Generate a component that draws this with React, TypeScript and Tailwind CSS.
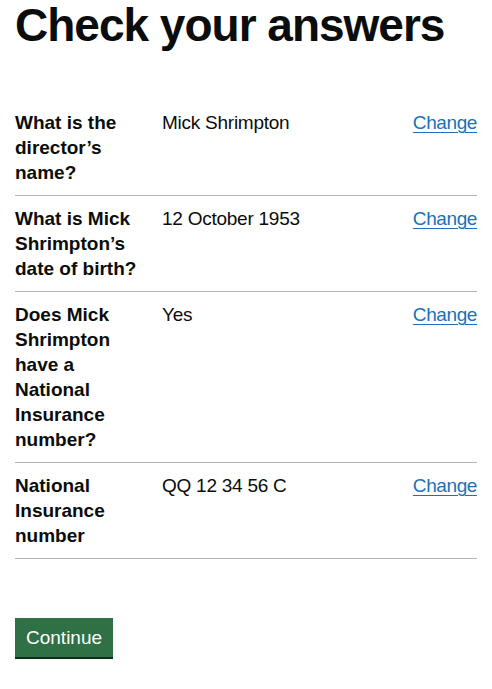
import React from "react";

const rows: { key: string; value: string }[] = [
  { key: "What is the director\u2019s name?", value: "Mick Shrimpton" },
  { key: "What is Mick Shrimpton\u2019s date of birth?", value: "12 October 1953" },
  { key: "Does Mick Shrimpton have a National Insurance number?", value: "Yes" },
  { key: "National Insurance number", value: "QQ 12 34 56 C" },
];

export default function App() {
  return (
    <div
      className="min-h-[689px] bg-white px-[15px] text-[#0b0c0c]"
      style={{ fontFamily: '"Liberation Sans", Arial, sans-serif' }}
    >
      <h1 className="m-0 mb-[50px] text-[46px] font-bold leading-[50px] tracking-[-1px]">
        Check your answers
      </h1>
      <dl className="m-0">
        {rows.map((r) => (
          <div
            key={r.key}
            className="flex border-b border-[#b1b4b6] py-[10px] text-[19px] leading-[25px]"
          >
            <dt className="w-[147px] shrink-0 pr-[20px] font-bold">{r.key}</dt>
            <dd className="m-0 flex-1 tracking-[-0.25px]">{r.value}</dd>
            <dd className="m-0 text-right tracking-[-0.4px]">
              <a
                href="#"
                className="text-[#1d70b8] underline decoration-1 underline-offset-[3px]"
              >
                Change
              </a>
            </dd>
          </div>
        ))}
      </dl>
      <button
        type="button"
        className="mt-[59px] flex h-[39px] items-center bg-[#2f7044] px-[11px] text-[19px] leading-none text-white shadow-[0_2px_0_#0b2e17]"
      >
        Continue
      </button>
    </div>
  );
}
